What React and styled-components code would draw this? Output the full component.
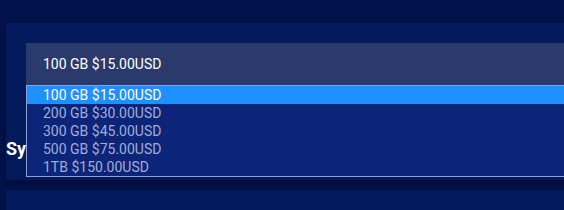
import styled, { createGlobalStyle } from "styled-components";

const GlobalStyle = createGlobalStyle`
  html, body {
    margin: 0;
    padding: 0;
    background: #02134b;
    font-family: Roboto, "Liberation Sans", sans-serif;
    overflow: hidden;
  }
`;

const plans = [
  "100 GB $15.00USD",
  "200 GB $30.00USD",
  "300 GB $45.00USD",
  "500 GB $75.00USD",
  "1TB $150.00USD",
];

const Page = styled.div`
  width: 564px;
  height: 210px;
  overflow: hidden;
  padding: 23px 0 0 6px;
  box-sizing: border-box;
  display: flex;
  flex-direction: column;
  gap: 10px;
`;

const Panel = styled.section`
  width: 620px;
  flex-shrink: 0;
  background: linear-gradient(180deg, #031b5d 0%, #031a5a 100%);
  box-shadow: 0 2px 6px rgba(0, 6, 30, 0.6);
  padding: 20px 0 ${(p) => p.$bottom || 21}px 0;
  box-sizing: border-box;
  min-height: ${(p) => p.$minHeight || 0}px;
`;

const SelectWrap = styled.div`
  position: relative;
  margin-left: 20px;
`;

const SelectBox = styled.div`
  height: 42px;
  background: #2b3a6d;
  color: #ffffff;
  font-size: 14px;
  display: flex;
  align-items: center;
  padding-left: 17px;
`;

const OptionList = styled.ul`
  position: absolute;
  top: 42px;
  left: 0;
  right: 0;
  margin: 0;
  padding: 0;
  list-style: none;
  background: #0c2579;
  border: 1px solid #8ea2dc;
  border-top-color: #7fa6f0;
  z-index: 10;
`;

const Option = styled.li`
  height: 18px;
  line-height: 18px;
  font-size: 14px;
  padding-left: 16px;
  color: ${(p) => (p.$active ? "#ffffff" : "#a3acd6")};
  background: ${(p) => (p.$active ? "#1e90ff" : "transparent")};
`;

const Heading = styled.h3`
  margin: 54px 0 0 0;
  font-size: 18px;
  line-height: 20px;
  font-weight: 700;
  color: #ffffff;
  white-space: nowrap;
`;

export default function App() {
  return (
    <>
      <GlobalStyle />
      <Page>
        <Panel>
          <SelectWrap>
            <SelectBox>100 GB $15.00USD</SelectBox>
            <OptionList>
              {plans.map((p, i) => (
                <Option key={p} $active={i === 0}>
                  {p}
                </Option>
              ))}
            </OptionList>
          </SelectWrap>
          <Heading>System Backup</Heading>
        </Panel>
        <Panel $minHeight={60} />
      </Page>
    </>
  );
}
